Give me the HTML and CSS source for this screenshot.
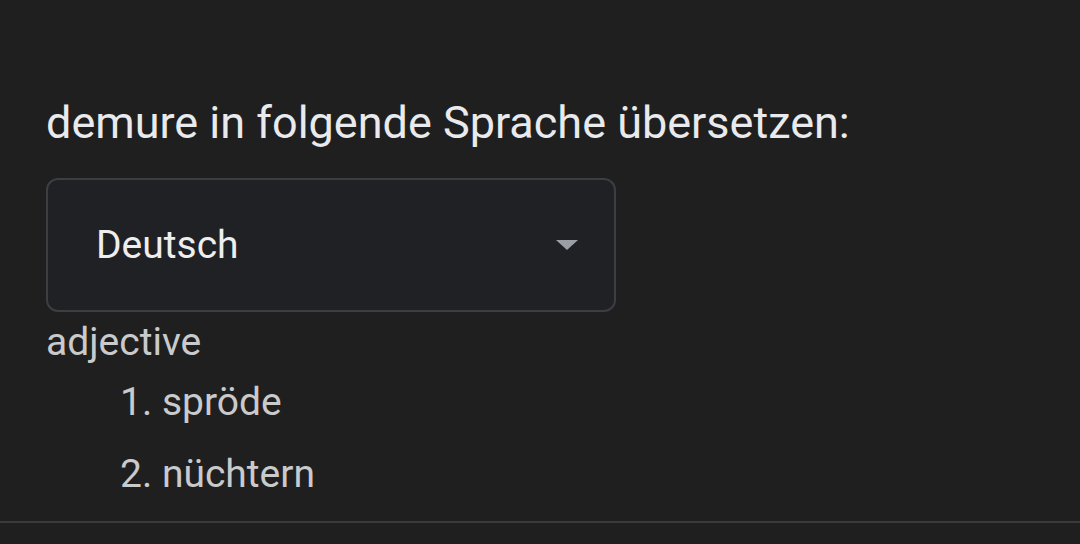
FILE: index.html
```html
<!DOCTYPE html>
<html lang="de">
<head>
<meta charset="utf-8">
<link rel="stylesheet" href="styles.css">
</head>
<body>
<div class="page">
  <main class="content">
    <h1 class="prompt">demure in folgende Sprache übersetzen:</h1>
    <div class="select">
      <span class="select-value">Deutsch</span>
      <svg class="caret" width="24" height="12" viewBox="0 0 24 12"><path d="M1 1 L23 1 L12 11 Z" fill="#9aa0a6"/></svg>
    </div>
    <div class="pos">adjective</div>
    <ol class="meanings">
      <li>spröde</li>
      <li>nüchtern</li>
    </ol>
  </main>
  <div class="divider"></div>
</div>
</body>
</html>
```
FILE: styles.css
```css
html, body {
  margin: 0;
  padding: 0;
  background: #1f1f1f;
}
body {
  width: 1080px;
  height: 544px;
  overflow: hidden;
  font-family: Roboto, "Noto Sans", sans-serif;
}
.page {
  display: flex;
  flex-direction: column;
  height: 544px;
}
.content {
  padding: 96px 0 0 46px;
  height: 521px;
  flex: none;
  box-sizing: border-box;
}
.prompt {
  margin: 0;
  font-size: 45px;
  font-weight: 400;
  color: #e8eaed;
  line-height: 54px;
  white-space: nowrap;
}
.select {
  margin-top: 28px;
  width: 570px;
  height: 134px;
  box-sizing: border-box;
  border: 2px solid #3c3e42;
  border-radius: 12px;
  background: #202124;
  display: flex;
  align-items: center;
  justify-content: space-between;
  padding: 0 35px 0 48px;
}
.select-value {
  font-size: 39px;
  color: #eeeeee;
}
.caret {
  display: block;
}
.pos {
  margin-top: 6px;
  font-size: 39px;
  color: #c9cacc;
  line-height: 48px;
}
.meanings {
  margin: 0;
  padding-left: 74px;
  list-style: none;
  counter-reset: m;
}
.meanings li {
  counter-increment: m;
  font-size: 39px;
  color: #c9cacc;
  line-height: 48px;
  margin-top: 24px;
}
.meanings li:first-child {
  margin-top: 12px;
}
.meanings li::before {
  content: counter(m) ". ";
}
.divider {
  height: 2px;
  background: #3a3a3a;
  flex: none;
}
```
